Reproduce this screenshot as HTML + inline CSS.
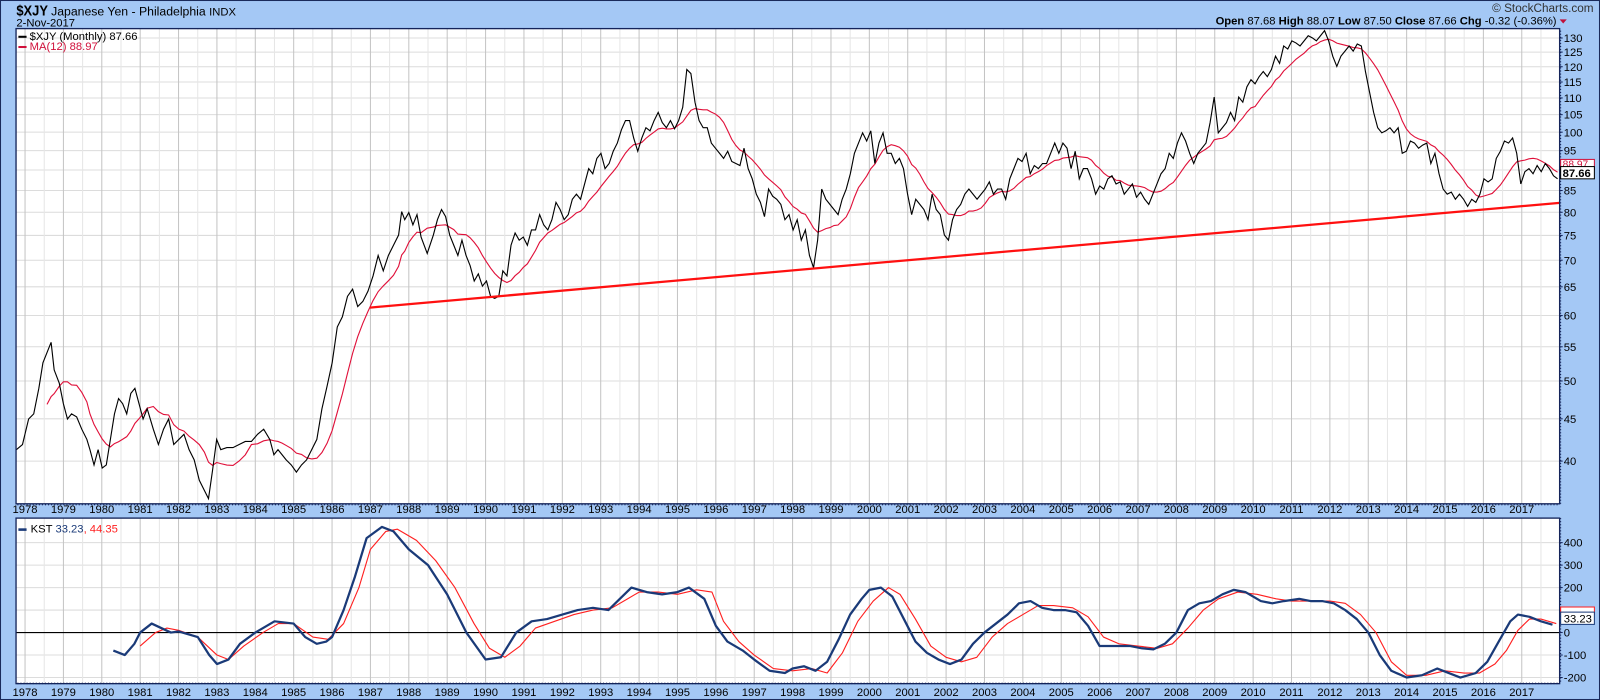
<!DOCTYPE html>
<html><head><meta charset="utf-8"><style>
html,body{margin:0;padding:0;background:#a4c8f5;width:1600px;height:700px;overflow:hidden}
svg{display:block}
text{font-family:"Liberation Sans",sans-serif}
</style></head><body>
<svg id="s" width="1600" height="700" viewBox="0 0 1565.5 685" preserveAspectRatio="none" xmlns="http://www.w3.org/2000/svg">
<rect x="0.5" y="0.5" width="1564.5" height="684" fill="#a4c8f5" stroke="#1a2a5a"/>
<text x="16" y="15" font-size="14.5" font-weight="bold" textLength="31" lengthAdjust="spacingAndGlyphs">$XJY</text>
<text x="50" y="15" font-size="12">Japanese Yen - Philadelphia <tspan font-size="11">INDX</tspan></text>
<text x="16" y="26" font-size="11">2-Nov-2017</text>
<text x="1460" y="12" font-size="11.5" fill="#333">© StockCharts.com</text>
<text x="1523" y="24" font-size="11" text-anchor="end"><tspan font-weight="bold">Open</tspan> 87.68  <tspan font-weight="bold">High</tspan> 88.07  <tspan font-weight="bold">Low</tspan> 87.50  <tspan font-weight="bold">Close</tspan> 87.66  <tspan font-weight="bold">Chg</tspan> -0.32 (-0.36%)</text>
<path d="M1526 19 l7 0 l-3.5 4z" fill="#c0103a"/>
<rect x="15.7" y="28" width="1510.3" height="465" fill="#fff"/>
<rect x="15.7" y="507" width="1510.3" height="162" fill="#fff"/>
<g id="grid"></g>
<g id="data"></g>
<rect x="15.7" y="28" width="1510.3" height="465" fill="none" stroke="#14245a" stroke-width="1.3"/>
<rect x="15.7" y="507" width="1510.3" height="162" fill="none" stroke="#14245a" stroke-width="1.3"/>
<g id="labels" font-size="11"></g>
<rect x="18" y="35" width="8" height="2" fill="#000"/>
<text x="29" y="39" font-size="11">$XJY (Monthly) 87.66</text>
<rect x="18" y="45" width="8" height="2" fill="#d0103a"/>
<text x="29" y="49" font-size="11" fill="#d0103a">MA(12) 88.97</text>
<rect x="18" y="517" width="8" height="2.5" fill="#1a3a78"/>
<text x="30" y="521" font-size="11">KST <tspan fill="#1a3a78">33.23</tspan><tspan fill="#ff2020">, 44.35</tspan></text>
<rect x="1527" y="156" width="33" height="10" fill="#fff" stroke="#d0103a"/>
<text x="1529" y="164" font-size="10" fill="#d0103a">88.97</text>
<rect x="1527" y="163" width="33" height="12" fill="#fff" stroke="#000"/>
<text x="1529" y="173" font-size="11" font-weight="bold">87.66</text>
<rect x="1527" y="594" width="33" height="7" fill="#fff" stroke="#ff2020"/>
<rect x="1527" y="599" width="33" height="12" fill="#fff" stroke="#1a3a78"/>
<text x="1530" y="609" font-size="11">33.23</text>
</svg>
<script>
var NS="http://www.w3.org/2000/svg";
function el(p,t,a,txt){var e=document.createElementNS(NS,t);for(var k in a)e.setAttribute(k,a[k]);if(txt!=null)e.textContent=txt;p.appendChild(e);return e;}
var X=function(y){return 24.5+37.55*(y-1978);};
var YT=function(v){return (38+359*Math.log(130/v))/1.022;};
var YB=function(v){return 619-0.22*v;};
var g=document.getElementById('grid'),L=document.getElementById('labels'),D=document.getElementById('data');
for(var v=40;v<=130;v+=5){var y=YT(v);el(g,'line',{x1:15.7,x2:1526,y1:y,y2:y,stroke:'#dcdcdc','stroke-width':1});el(L,'text',{x:1530,y:y+4},String(v));el(L,'line',{x1:1526,x2:1529,y1:y,y2:y,stroke:'#14245a'});}
for(var v=-200;v<=400;v+=100){var y=YB(v);el(g,'line',{x1:15.7,x2:1526,y1:y,y2:y,stroke:'#dcdcdc'});el(L,'text',{x:1530,y:y+4},String(v===0?'0':v));el(L,'line',{x1:1526,x2:1529,y1:y,y2:y,stroke:'#14245a'});}
for(var yr=1978;yr<=2017.5;yr+=0.5){var x=X(yr);var c=(yr%1===0)?'#c4c4c4':'#e6e6e6';
el(g,'line',{x1:x,x2:x,y1:28,y2:493,stroke:c});el(g,'line',{x1:x,x2:x,y1:507,y2:669,stroke:c});
if(yr%1===0){el(L,'text',{x:x,y:502,'text-anchor':'middle'},String(yr));el(L,'text',{x:x,y:681,'text-anchor':'middle'},String(yr));}}
for(var y=30;y<669;y+=3){if(y>493&&y<507)continue;el(L,'rect',{x:1526,y:y,width:1.5,height:1,fill:'#14245a'});}
for(var x=17;x<1526;x+=3){el(L,'rect',{x:x,y:493,width:1,height:1.5,fill:'#14245a'});el(L,'rect',{x:x,y:668,width:1,height:1.5,fill:'#14245a'});}
var P=[16,440,22,435,28,410,33,405,38,380,42,355,46,345,50,335,53,362,58,375,62,395,66,410,70,405,75,408,80,420,85,430,88,440,92,455,96,440,100,458,104,455,108,430,112,405,116,390,120,395,124,405,128,385,132,380,136,395,140,410,144,400,150,420,155,435,160,420,165,410,170,435,175,430,180,425,185,440,190,450,195,470,200,480,204,488,208,460,212,430,216,440,222,438,228,438,234,435,240,432,246,432,252,425,258,420,264,430,268,445,272,440,276,445,280,450,285,455,290,462,295,455,300,450,305,440,310,430,315,400,320,378,325,355,330,320,335,310,340,290,345,283,350,300,355,295,360,285,365,270,370,250,375,265,380,250,385,240,390,230,393,207,396,215,400,208,404,220,408,210,412,232,418,248,424,230,428,215,432,205,436,212,440,230,444,240,448,250,452,235,456,250,460,260,464,275,468,268,472,280,476,275,480,290,484,292,488,290,492,265,496,270,500,240,504,228,508,235,512,232,516,240,520,225,524,225,528,210,532,220,536,225,540,215,544,198,548,205,552,215,556,210,560,195,564,190,568,195,572,180,576,165,580,170,584,155,588,150,592,165,596,160,600,148,604,140,608,127,612,118,616,118,620,135,624,148,628,135,632,125,636,128,640,118,644,110,648,120,652,125,656,118,660,126,664,118,668,105,672,68,676,72,680,100,684,118,688,125,692,125,696,140,700,145,704,150,708,155,712,148,716,158,720,160,724,162,728,145,732,165,736,175,740,190,744,198,748,212,752,185,756,192,760,195,764,200,768,215,772,210,776,225,780,215,784,235,788,225,792,250,796,262,800,235,804,185,808,195,812,200,816,205,820,210,824,195,828,185,832,170,836,150,840,140,844,130,848,138,852,128,856,160,860,140,864,130,868,150,872,150,876,160,880,155,884,165,888,190,892,210,896,195,900,200,904,205,908,215,912,190,916,205,920,210,924,230,928,235,932,215,936,205,940,200,944,190,948,185,952,190,956,195,960,190,964,185,968,178,972,190,976,185,980,185,984,195,988,175,992,165,996,155,1000,158,1004,150,1008,170,1012,162,1016,165,1020,160,1024,160,1028,150,1032,140,1036,150,1040,140,1044,145,1048,165,1052,148,1056,175,1060,165,1064,165,1068,175,1072,190,1076,182,1080,185,1084,175,1088,172,1092,180,1096,178,1100,190,1104,185,1108,180,1112,193,1116,188,1120,195,1124,200,1128,190,1132,180,1136,170,1140,165,1144,150,1148,155,1152,140,1156,130,1160,138,1164,150,1168,160,1172,150,1176,145,1180,140,1184,120,1188,95,1192,130,1196,125,1200,120,1204,110,1208,118,1212,95,1216,100,1220,85,1224,78,1228,82,1232,75,1236,70,1240,75,1244,68,1248,55,1252,62,1256,45,1260,48,1264,40,1268,42,1272,45,1276,40,1280,35,1284,37,1288,40,1292,35,1296,30,1300,40,1304,55,1308,65,1312,55,1316,50,1320,45,1324,50,1328,43,1332,45,1336,70,1340,90,1344,110,1348,125,1352,130,1356,128,1360,125,1364,130,1368,125,1372,150,1376,148,1380,138,1384,140,1388,145,1392,142,1396,140,1400,160,1404,150,1408,170,1412,185,1416,190,1420,188,1424,195,1428,190,1432,195,1436,202,1440,195,1444,198,1448,190,1452,175,1456,178,1460,175,1464,155,1468,148,1472,138,1476,140,1480,135,1484,150,1488,180,1492,168,1496,165,1500,170,1504,162,1508,168,1512,160,1516,165,1520,172,1524,175];
var pts=[];for(var i=0;i<P.length;i+=2)pts.push([P[i],P[i+1]]);
var ma=[];for(var i=0;i<pts.length;i++){var x=pts[i][0];if(x<43)continue;var s=0,n=0;for(var j=0;j<=i;j++){if(pts[j][0]>=x-37.5){s+=pts[j][1];n++;}}ma.push(x+','+(s/n).toFixed(1));}
el(D,'polyline',{points:ma.join(' '),fill:'none',stroke:'#e0103a','stroke-width':1.1});
el(D,'polyline',{points:pts.map(function(p){return p.join(',');}).join(' '),fill:'none',stroke:'#000','stroke-width':1.1});
el(D,'line',{x1:362,y1:301,x2:1526,y2:198.5,stroke:'#ff1010','stroke-width':2.2});
el(D,'line',{x1:15.7,x2:1526,y1:YB(0),y2:YB(0),stroke:'#000','stroke-width':1});
var B=[1980.3,-80,1980.6,-100,1980.85,-50,1981,0,1981.3,40,1981.55,20,1981.8,0,1982,5,1982.3,-10,1982.5,-20,1982.8,-100,1983,-140,1983.3,-120,1983.6,-50,1984,0,1984.5,50,1985,40,1985.3,-20,1985.6,-50,1985.85,-40,1986,-20,1986.3,100,1986.6,250,1986.9,420,1987.3,470,1987.6,450,1988,370,1988.5,300,1989,170,1989.5,0,1990,-120,1990.4,-110,1990.8,0,1991.2,50,1991.6,60,1992,80,1992.4,100,1992.8,110,1993.2,100,1993.5,150,1993.8,200,1994.2,180,1994.6,170,1995,180,1995.3,200,1995.7,150,1996,30,1996.3,-40,1996.7,-80,1997,-120,1997.4,-170,1997.8,-180,1998,-160,1998.3,-150,1998.6,-170,1998.9,-130,1999.2,-30,1999.5,80,1999.8,150,2000,190,2000.3,200,2000.6,160,2000.9,60,2001.2,-40,2001.5,-90,2001.8,-120,2002.1,-140,2002.4,-120,2002.7,-50,2003,0,2003.3,40,2003.6,80,2003.9,130,2004.2,140,2004.5,110,2004.8,100,2005.1,100,2005.4,90,2005.7,30,2006,-60,2006.4,-60,2006.8,-60,2007.1,-70,2007.4,-75,2007.7,-50,2008,0,2008.3,100,2008.6,130,2008.9,140,2009.2,170,2009.5,190,2009.8,180,2010.2,140,2010.5,130,2010.8,140,2011.2,150,2011.5,140,2011.8,140,2012.1,130,2012.4,100,2012.7,60,2013,0,2013.3,-100,2013.6,-170,2014,-200,2014.4,-190,2014.8,-160,2015.1,-180,2015.4,-200,2015.8,-180,2016.1,-130,2016.4,-40,2016.7,50,2016.9,80,2017.2,70,2017.5,50,2017.8,35];
var R=[1981,-60,1981.4,0,1981.7,20,1982,10,1982.5,-20,1983,-100,1983.3,-120,1983.7,-60,1984.2,0,1984.6,40,1985,40,1985.5,-20,1985.9,-30,1986.3,40,1986.7,200,1987,370,1987.4,450,1987.7,460,1988.2,410,1988.7,320,1989.2,200,1989.7,40,1990.1,-70,1990.5,-110,1990.9,-60,1991.3,20,1991.8,50,1992.3,80,1992.8,100,1993.3,110,1993.7,150,1994,180,1994.5,180,1995,170,1995.5,190,1995.9,180,1996.2,50,1996.6,-40,1997,-100,1997.5,-160,1998,-170,1998.5,-160,1998.9,-180,1999.3,-90,1999.7,50,2000.1,140,2000.5,200,2000.8,170,2001.2,60,2001.6,-60,2002,-110,2002.4,-130,2002.8,-110,2003.2,-20,2003.6,40,2004,80,2004.4,120,2004.8,120,2005.3,110,2005.7,70,2006.1,-20,2006.5,-50,2007,-60,2007.5,-70,2007.9,-50,2008.3,20,2008.7,100,2009.1,150,2009.6,180,2010.1,170,2010.6,150,2011,140,2011.5,140,2012,140,2012.4,130,2012.8,80,2013.2,0,2013.6,-130,2014,-190,2014.5,-190,2015,-170,2015.5,-180,2015.9,-180,2016.3,-140,2016.6,-80,2016.9,10,2017.2,60,2017.5,60,2017.9,40];
function path(A){var s=[];for(var i=0;i<A.length;i+=2)s.push(X(A[i]).toFixed(1)+','+YB(A[i+1]).toFixed(1));return s.join(' ');}
el(D,'polyline',{points:path(R),fill:'none',stroke:'#ff2020','stroke-width':1.1,'stroke-linejoin':'round'});
el(D,'polyline',{points:path(B),fill:'none',stroke:'#1a3a78','stroke-width':2.2,'stroke-linejoin':'round'});
</script>
</body></html>
